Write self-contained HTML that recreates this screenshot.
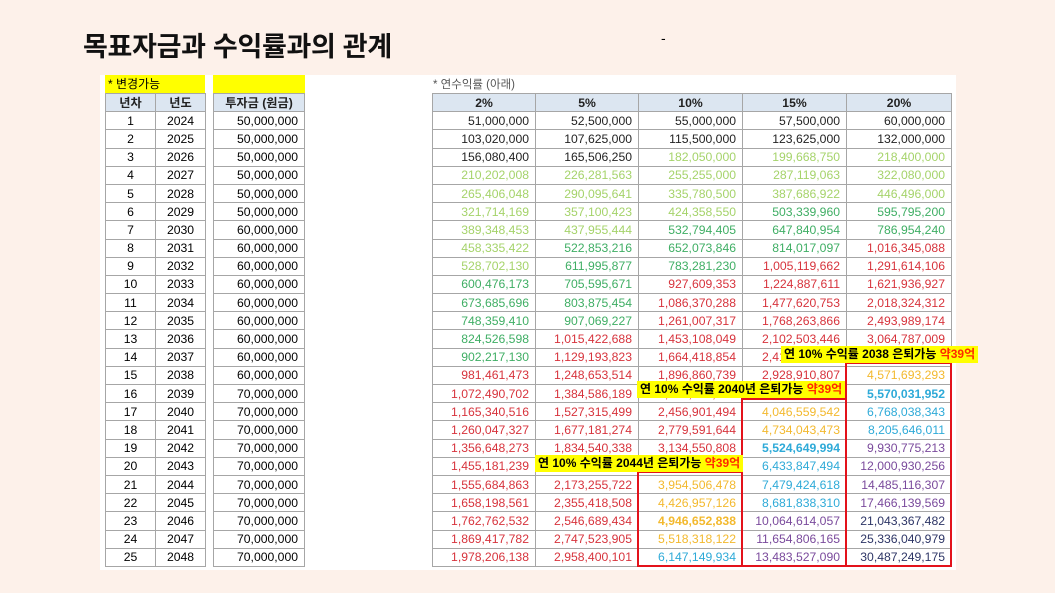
<!DOCTYPE html>
<html><head><meta charset="utf-8"><style>
*{margin:0;padding:0;box-sizing:border-box}
body{width:1055px;height:593px;background:#fdf1ea;position:relative;overflow:hidden;font-family:"Liberation Sans","Noto Sans CJK KR",sans-serif}
.title{position:absolute;left:83px;top:25px;font-size:27px;font-weight:bold;color:#111;letter-spacing:-0.3px}
.dash{position:absolute;left:661px;top:30px;font-size:14px}
.panel{position:absolute;left:100px;top:75px;width:856px;height:495px;background:#fff}
table{position:absolute;border-collapse:collapse;table-layout:fixed;font-size:12.2px}
td{height:18.2px;border:1px solid #a6a6a6;padding:0 4px;white-space:nowrap;line-height:16px}
table tr.h td{background:#dce6f1;font-weight:bold;text-align:center;color:#222;padding:0 2px}
.L td{text-align:center}
.R td{text-align:right;padding-right:6px}
.k{color:#222}.lg{color:#a5d36a}.g{color:#3fae64}.r{color:#d7333c}.o{color:#f3b92e}.b{color:#2eaad8}.p{color:#7a4a9c}.n{color:#2d3566}.bd{font-weight:bold}
.yel{position:absolute;background:#ffff00;font-size:12px;top:75px;height:18px;line-height:18px}
.cap{position:absolute;left:433px;top:76px;font-size:11.5px;color:#555}
.lab{position:absolute;background:#ffff00;font-weight:bold;font-size:12px;height:17px;line-height:17px;padding:0 3px;white-space:nowrap;color:#000}
.lab span{color:#ff2a00}
.box{position:absolute;border:2.5px solid #e3121b}
</style></head><body>
<div class="title">목표자금과 수익률과의 관계</div>
<div class="dash">-</div>
<div class="panel"></div>
<div class="yel" style="left:105px;width:100px;padding-left:3px">* 변경가능</div>
<div class="yel" style="left:213px;width:92px"></div>
<div class="cap">* 연수익률 (아래)</div>
<table class="L" style="left:105px;top:93px;width:100px"><colgroup><col style="width:50px"><col style="width:50px"></colgroup>
<tr class="h"><td>년차</td><td>년도</td></tr>
<tr><td>1</td><td>2024</td></tr><tr><td>2</td><td>2025</td></tr><tr><td>3</td><td>2026</td></tr><tr><td>4</td><td>2027</td></tr><tr><td>5</td><td>2028</td></tr><tr><td>6</td><td>2029</td></tr><tr><td>7</td><td>2030</td></tr><tr><td>8</td><td>2031</td></tr><tr><td>9</td><td>2032</td></tr><tr><td>10</td><td>2033</td></tr><tr><td>11</td><td>2034</td></tr><tr><td>12</td><td>2035</td></tr><tr><td>13</td><td>2036</td></tr><tr><td>14</td><td>2037</td></tr><tr><td>15</td><td>2038</td></tr><tr><td>16</td><td>2039</td></tr><tr><td>17</td><td>2040</td></tr><tr><td>18</td><td>2041</td></tr><tr><td>19</td><td>2042</td></tr><tr><td>20</td><td>2043</td></tr><tr><td>21</td><td>2044</td></tr><tr><td>22</td><td>2045</td></tr><tr><td>23</td><td>2046</td></tr><tr><td>24</td><td>2047</td></tr><tr><td>25</td><td>2048</td></tr>
</table>
<table class="R" style="left:213px;top:93px;width:92px">
<tr class="h"><td>투자금 (원금)</td></tr>
<tr><td>50,000,000</td></tr><tr><td>50,000,000</td></tr><tr><td>50,000,000</td></tr><tr><td>50,000,000</td></tr><tr><td>50,000,000</td></tr><tr><td>50,000,000</td></tr>
<tr><td>60,000,000</td></tr><tr><td>60,000,000</td></tr><tr><td>60,000,000</td></tr><tr><td>60,000,000</td></tr><tr><td>60,000,000</td></tr><tr><td>60,000,000</td></tr><tr><td>60,000,000</td></tr><tr><td>60,000,000</td></tr><tr><td>60,000,000</td></tr>
<tr><td>70,000,000</td></tr><tr><td>70,000,000</td></tr><tr><td>70,000,000</td></tr><tr><td>70,000,000</td></tr><tr><td>70,000,000</td></tr><tr><td>70,000,000</td></tr><tr><td>70,000,000</td></tr><tr><td>70,000,000</td></tr><tr><td>70,000,000</td></tr><tr><td>70,000,000</td></tr>
</table>
<table class="R" style="left:432px;top:93px;width:519px"><colgroup><col style="width:103px"><col style="width:103px"><col style="width:104px"><col style="width:104px"><col style="width:105px"></colgroup>
<tr class="h"><td>2%</td><td>5%</td><td>10%</td><td>15%</td><td>20%</td></tr>
<tr><td class="k">51,000,000</td><td class="k">52,500,000</td><td class="k">55,000,000</td><td class="k">57,500,000</td><td class="k">60,000,000</td></tr>
<tr><td class="k">103,020,000</td><td class="k">107,625,000</td><td class="k">115,500,000</td><td class="k">123,625,000</td><td class="k">132,000,000</td></tr>
<tr><td class="k">156,080,400</td><td class="k">165,506,250</td><td class="lg">182,050,000</td><td class="lg">199,668,750</td><td class="lg">218,400,000</td></tr>
<tr><td class="lg">210,202,008</td><td class="lg">226,281,563</td><td class="lg">255,255,000</td><td class="lg">287,119,063</td><td class="lg">322,080,000</td></tr>
<tr><td class="lg">265,406,048</td><td class="lg">290,095,641</td><td class="lg">335,780,500</td><td class="lg">387,686,922</td><td class="lg">446,496,000</td></tr>
<tr><td class="lg">321,714,169</td><td class="lg">357,100,423</td><td class="lg">424,358,550</td><td class="g">503,339,960</td><td class="g">595,795,200</td></tr>
<tr><td class="lg">389,348,453</td><td class="lg">437,955,444</td><td class="g">532,794,405</td><td class="g">647,840,954</td><td class="g">786,954,240</td></tr>
<tr><td class="lg">458,335,422</td><td class="g">522,853,216</td><td class="g">652,073,846</td><td class="g">814,017,097</td><td class="r">1,016,345,088</td></tr>
<tr><td class="lg">528,702,130</td><td class="g">611,995,877</td><td class="g">783,281,230</td><td class="r">1,005,119,662</td><td class="r">1,291,614,106</td></tr>
<tr><td class="g">600,476,173</td><td class="g">705,595,671</td><td class="r">927,609,353</td><td class="r">1,224,887,611</td><td class="r">1,621,936,927</td></tr>
<tr><td class="g">673,685,696</td><td class="g">803,875,454</td><td class="r">1,086,370,288</td><td class="r">1,477,620,753</td><td class="r">2,018,324,312</td></tr>
<tr><td class="g">748,359,410</td><td class="g">907,069,227</td><td class="r">1,261,007,317</td><td class="r">1,768,263,866</td><td class="r">2,493,989,174</td></tr>
<tr><td class="g">824,526,598</td><td class="r">1,015,422,688</td><td class="r">1,453,108,049</td><td class="r">2,102,503,446</td><td class="r">3,064,787,009</td></tr>
<tr><td class="g">902,217,130</td><td class="r">1,129,193,823</td><td class="r">1,664,418,854</td><td class="r">2,417,878,963</td><td class="r">3,677,744,411</td></tr>
<tr><td class="r">981,461,473</td><td class="r">1,248,653,514</td><td class="r">1,896,860,739</td><td class="r">2,928,910,807</td><td class="o">4,571,693,293</td></tr>
<tr><td class="r">1,072,490,702</td><td class="r">1,384,586,189</td><td class="r">2,156,546,813</td><td class="r">3,448,547,428</td><td class="b bd">5,570,031,952</td></tr>
<tr><td class="r">1,165,340,516</td><td class="r">1,527,315,499</td><td class="r">2,456,901,494</td><td class="o">4,046,559,542</td><td class="b">6,768,038,343</td></tr>
<tr><td class="r">1,260,047,327</td><td class="r">1,677,181,274</td><td class="r">2,779,591,644</td><td class="o">4,734,043,473</td><td class="b">8,205,646,011</td></tr>
<tr><td class="r">1,356,648,273</td><td class="r">1,834,540,338</td><td class="r">3,134,550,808</td><td class="b bd">5,524,649,994</td><td class="p">9,930,775,213</td></tr>
<tr><td class="r">1,455,181,239</td><td class="r">1,996,267,355</td><td class="r">3,518,005,889</td><td class="b">6,433,847,494</td><td class="p">12,000,930,256</td></tr>
<tr><td class="r">1,555,684,863</td><td class="r">2,173,255,722</td><td class="o">3,954,506,478</td><td class="b">7,479,424,618</td><td class="p">14,485,116,307</td></tr>
<tr><td class="r">1,658,198,561</td><td class="r">2,355,418,508</td><td class="o">4,426,957,126</td><td class="b">8,681,838,310</td><td class="p">17,466,139,569</td></tr>
<tr><td class="r">1,762,762,532</td><td class="r">2,546,689,434</td><td class="o bd">4,946,652,838</td><td class="p">10,064,614,057</td><td class="n">21,043,367,482</td></tr>
<tr><td class="r">1,869,417,782</td><td class="r">2,747,523,905</td><td class="o">5,518,318,122</td><td class="p">11,654,806,165</td><td class="n">25,336,040,979</td></tr>
<tr><td class="r">1,978,206,138</td><td class="r">2,958,400,101</td><td class="b">6,147,149,934</td><td class="p">13,483,527,090</td><td class="n">30,487,249,175</td></tr>
</table>
<div class="box" style="left:845px;top:362px;width:107px;height:205px"></div>
<div class="box" style="left:741px;top:398px;width:106px;height:169px"></div>
<div class="box" style="left:637px;top:471px;width:106px;height:96px"></div>
<div class="lab" style="left:781px;top:346px">연 10% 수익률 2038 은퇴가능 <span>약39억</span></div>
<div class="lab" style="left:637px;top:381px">연 10% 수익률 2040년 은퇴가능 <span>약39억</span></div>
<div class="lab" style="left:535px;top:455px">연 10% 수익률 2044년 은퇴가능 <span>약39억</span></div>
</body></html>
